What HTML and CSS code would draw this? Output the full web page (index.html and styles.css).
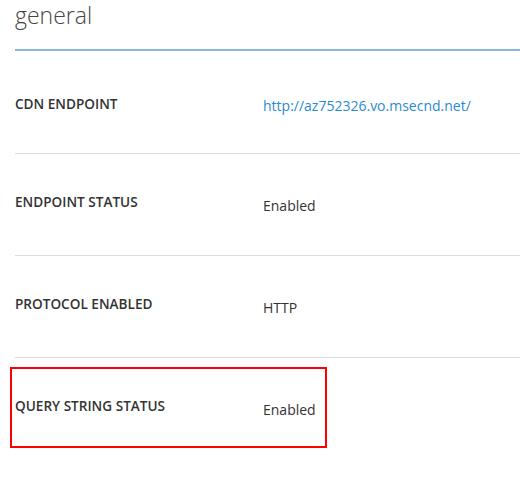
FILE: index.html
```html
<!DOCTYPE html>
<html>
<head>
<meta charset="utf-8">
<link rel="stylesheet" href="styles.css">
</head>
<body>
<div class="panel">
  <h1 class="title">general</h1>
  <div class="rows">
    <div class="row row-first">
      <div class="label">CDN ENDPOINT</div>
      <div class="value"><a class="link" href="#">http://az752326.vo.msecnd.net/</a></div>
    </div>
    <div class="row">
      <div class="label">ENDPOINT STATUS</div>
      <div class="value">Enabled</div>
    </div>
    <div class="row">
      <div class="label">PROTOCOL ENABLED</div>
      <div class="value">HTTP</div>
    </div>
    <div class="row row-last">
      <div class="label">QUERY STRING STATUS</div>
      <div class="value">Enabled</div>
      <div class="highlight"></div>
    </div>
  </div>
</div>
</body>
</html>
```

FILE: styles.css
```css
html, body {
  margin: 0;
  padding: 0;
  background: #ffffff;
}

body {
  width: 520px;
  height: 487px;
  overflow: hidden;
  font-family: "Open Sans", "Noto Sans", sans-serif;
  color: #333333;
}

.panel {
  padding-left: 15px;
}

.title {
  margin: 0;
  height: 51px;
  box-sizing: border-box;
  font-size: 23px;
  font-weight: 300;
  line-height: 31px;
  color: #444444;
  border-bottom: 2px solid #86b6e4;
}

.rows {
  display: flex;
  flex-direction: column;
}

.row {
  position: relative;
  display: grid;
  grid-template-columns: 248px 1fr;
  align-items: start;
  height: 102px;
  box-sizing: border-box;
  padding-top: 40px;
  border-bottom: 1px solid #dddddd;
}

.row-first {
  height: 103px;
  padding-top: 45px;
}

.row-last {
  border-bottom: none;
}

.label {
  font-size: 13.6px;
  font-weight: 600;
  line-height: 16px;
  color: #333333;
}

.value {
  font-size: 14px;
  line-height: 18px;
  margin-top: 3px;
  color: #333333;
}

.row-first .value {
  margin-top: 1px;
}

.link {
  color: #2a8ad2;
  text-decoration: none;
}

.highlight {
  position: absolute;
  left: -5px;
  top: 9px;
  width: 317px;
  height: 81px;
  box-sizing: border-box;
  border: 2px solid #ff0000;
}
```
